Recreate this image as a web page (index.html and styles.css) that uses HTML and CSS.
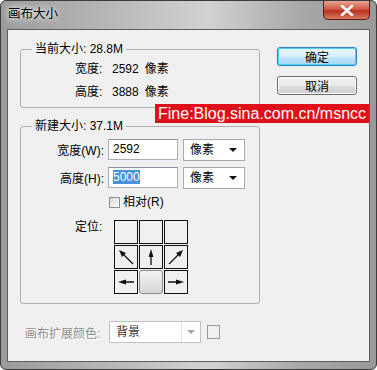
FILE: index.html
```html
<!DOCTYPE html>
<html lang="zh-CN">
<head>
    <meta charset="UTF-8">
    <meta name="viewport" content="width=device-width, initial-scale=1.0">
    <title>画布大小</title>
    <link rel="stylesheet" href="styles.css">
</head>
<body>

    <div class="window">
        <div class="titlebar">
            <span class="title">画布大小</span>
            <div class="close">
                <svg width="14" height="11" viewBox="0 0 14 11">
                    <path d="M2 1 L12 10 M12 1 L2 10" stroke="#fff" stroke-width="2.6" stroke-linecap="round"/>
                </svg>
            </div>
        </div>

        <div class="client">
            <div class="main">
                <fieldset class="group current">
                    <legend>当前大小: 28.8M</legend>
                    <div class="info-row"><span class="info-label">宽度:</span><span>2592</span><span class="info-unit">像素</span></div>
                    <div class="info-row"><span class="info-label">高度:</span><span>3888</span><span class="info-unit">像素</span></div>
                </fieldset>

                <fieldset class="group new">
                    <legend>新建大小: 37.1M</legend>
                    <div class="form-row">
                        <label class="form-label">宽度(W):</label>
                        <div class="field">2592</div>
                        <div class="dropdown">像素<span class="arrow"></span></div>
                    </div>
                    <div class="form-row second">
                        <label class="form-label">高度(H):</label>
                        <div class="field"><span class="selected">5000</span></div>
                        <div class="dropdown">像素<span class="arrow"></span></div>
                    </div>
                    <div class="check-row">
                        <span class="checkbox"></span>
                        <span>相对(R)</span>
                    </div>
                    <div class="anchor-row">
                        <span class="anchor-label">定位:</span>
                        <div class="anchor-grid">
                            <div class="cell"></div>
                            <div class="cell"></div>
                            <div class="cell"></div>
                            <div class="cell">
                                <svg width="22" height="22" viewBox="0 0 22 22"><line x1="18" y1="18" x2="7" y2="7" stroke="#111" stroke-width="1.3"/><polygon points="4,4 11,7 7,11" fill="#111"/></svg>
                            </div>
                            <div class="cell">
                                <svg width="22" height="22" viewBox="0 0 22 22"><line x1="11" y1="19" x2="11" y2="7" stroke="#111" stroke-width="1.3"/><polygon points="11,3 8.6,11 13.4,11" fill="#111"/></svg>
                            </div>
                            <div class="cell">
                                <svg width="22" height="22" viewBox="0 0 22 22"><line x1="4" y1="18" x2="15" y2="7" stroke="#111" stroke-width="1.3"/><polygon points="18,4 11,7 15,11" fill="#111"/></svg>
                            </div>
                            <div class="cell">
                                <svg width="22" height="22" viewBox="0 0 22 22"><line x1="19" y1="11" x2="7" y2="11" stroke="#111" stroke-width="1.3"/><polygon points="3,11 11,8.6 11,13.4" fill="#111"/></svg>
                            </div>
                            <div class="cell center"></div>
                            <div class="cell">
                                <svg width="22" height="22" viewBox="0 0 22 22"><line x1="3" y1="11" x2="15" y2="11" stroke="#111" stroke-width="1.3"/><polygon points="19,11 11,8.6 11,13.4" fill="#111"/></svg>
                            </div>
                        </div>
                    </div>
                </fieldset>

                <div class="ext-row">
                    <span class="ext-label">画布扩展颜色:</span>
                    <div class="dropdown disabled">背景<span class="drop-part"><span class="arrow"></span></span></div>
                    <span class="swatch"></span>
                </div>
            </div>

            <div class="buttons">
                <button class="btn default">确定</button>
                <button class="btn">取消</button>
            </div>
        </div>

        <div class="watermark">Fine:Blog.sina.com.cn/msncc</div>
    </div>

</body>
</html>
```

FILE: styles.css
```css
body {
    margin: 0;
    font-family: "Liberation Sans", "Noto Sans CJK SC", sans-serif;
    font-size: 12px;
    color: #000;
}
.window {
    position: relative;
    width: 377px;
    height: 370px;
    box-sizing: border-box;
    border: 1px solid #3b3b3b;
    border-radius: 6px;
    padding: 0 6px 7px;
    display: flex;
    flex-direction: column;
    overflow: hidden;
    background: linear-gradient(to right, #9b9b9b, #b8b8b8 30%, #d2d2d2 55%, #a8a8a8 80%, #999);
}
.titlebar {
    height: 28px;
    display: flex;
    justify-content: space-between;
    align-items: flex-start;
}
.title {
    margin: 5px 0 0 1px;
    font-size: 12.5px;
    line-height: 16px;
    text-shadow: 0 0 5px #fff, 0 0 9px #fff;
}
.close {
    width: 47px;
    height: 19px;
    box-sizing: border-box;
    border: 1px solid #5a1d15;
    border-top: none;
    border-radius: 0 0 5px 5px;
    background: linear-gradient(#e6a698, #cf5a45 45%, #b8321f 55%, #d87a63);
    display: flex;
    justify-content: center;
    align-items: center;
}
.client {
    flex: 1;
    display: flex;
    background: #f0f0f0;
    border: 1px solid #5e5e5e;
}
.main {
    width: 252px;
    padding-left: 12px;
    box-sizing: border-box;
}
.group {
    width: 240px;
    min-width: 0;
    box-sizing: border-box;
    margin: 12px 0 0;
    padding: 5px 0 7px;
    border: 1px solid #aeaeae;
    border-radius: 3px;
}
.group.new {
    margin-top: 11px;
    padding-bottom: 9px;
}
.group legend {
    margin-left: 11px;
    padding: 0 3px;
    line-height: 15px;
}
.info-row {
    display: flex;
    padding-left: 54px;
    line-height: 15px;
}
.info-row + .info-row {
    margin-top: 8px;
}
.info-label {
    width: 37px;
}
.info-unit {
    margin-left: 6px;
}
.form-row {
    display: flex;
    align-items: center;
    height: 21px;
}
.form-row.second {
    margin-top: 7px;
}
.form-label {
    width: 83px;
    text-align: right;
}
.field {
    width: 70px;
    height: 21px;
    box-sizing: border-box;
    margin-left: 4px;
    padding: 2px 4px;
    border: 1px solid #abadb3;
    border-top-color: #8f939b;
    background: #fff;
    line-height: 15px;
}
.selected {
    background: #4a92dc;
    color: #fff;
}
.dropdown {
    position: relative;
    width: 62px;
    height: 22px;
    box-sizing: border-box;
    margin-left: 5px;
    padding-left: 6px;
    border: 1px solid #a9a9a9;
    background: #fff;
    line-height: 20px;
}
.arrow {
    position: absolute;
    right: 7px;
    top: 8px;
    border-left: 4px solid transparent;
    border-right: 4px solid transparent;
    border-top: 4px solid #111;
}
.check-row {
    display: flex;
    align-items: center;
    margin-top: 7px;
    padding-left: 88px;
    line-height: 15px;
}
.checkbox {
    width: 11px;
    height: 11px;
    box-sizing: border-box;
    margin-right: 3px;
    border: 1px solid #8e8f8f;
    background: linear-gradient(135deg, #dcdcdc, #fbfbfb);
}
.anchor-row {
    display: flex;
    margin-top: 10px;
}
.anchor-label {
    width: 93px;
    box-sizing: border-box;
    padding-left: 54px;
    line-height: 15px;
}
.anchor-grid {
    display: grid;
    grid-template-columns: repeat(3, 24px);
    grid-auto-rows: 24px;
    gap: 1px;
}
.cell {
    box-sizing: border-box;
    border: 1px solid #111;
    background: #f0f0f0;
}
.cell svg {
    display: block;
}
.cell.center {
    border: 1px solid #8c8c8c;
    border-radius: 3px;
    background: linear-gradient(#f4f4f4, #d6d6d6);
}
.ext-row {
    display: flex;
    align-items: center;
    margin-top: 17px;
    height: 22px;
}
.ext-label {
    width: 89px;
    box-sizing: border-box;
    padding-left: 5px;
    color: #8d8d8d;
    text-shadow: 1px 1px 0 #fff;
}
.dropdown.disabled {
    width: 92px;
    margin-left: 0;
    border-color: #c2c2c2;
    color: #333;
}
.drop-part {
    position: absolute;
    right: 0;
    top: 0;
    width: 18px;
    height: 20px;
    border-left: 1px solid #e2e2e2;
}
.drop-part .arrow {
    right: 5px;
    border-top-color: #a6a6a6;
}
.swatch {
    width: 13px;
    height: 14px;
    box-sizing: border-box;
    margin-left: 6px;
    border: 1px solid #9a9a9a;
}
.buttons {
    display: flex;
    flex-direction: column;
    gap: 10px;
    margin-left: 17px;
    padding-top: 17px;
}
.btn {
    width: 80px;
    height: 19px;
    padding: 0;
    font-family: inherit;
    font-size: 12px;
    color: #000;
    border: 1px solid #707070;
    border-radius: 3px;
    background: linear-gradient(#f3f3f3, #ebebeb 50%, #dddddd 51%, #cfcfcf);
    box-shadow: inset 0 0 0 1px #fcfcfc;
}
.btn.default {
    border-color: #3c7fb1;
    background: linear-gradient(#eaf6fd, #d9f0fc 50%, #bee6fd 51%, #a7d9f5);
    box-shadow: inset 0 0 0 1px #48d2f8, 0 0 2px #9fe2f7;
}
.watermark {
    position: absolute;
    left: 154px;
    top: 103px;
    width: 214px;
    height: 19px;
    padding-left: 3px;
    box-sizing: border-box;
    background: #e0101a;
    color: #fff;
    font-size: 16px;
    line-height: 19px;
    white-space: nowrap;
}
```
